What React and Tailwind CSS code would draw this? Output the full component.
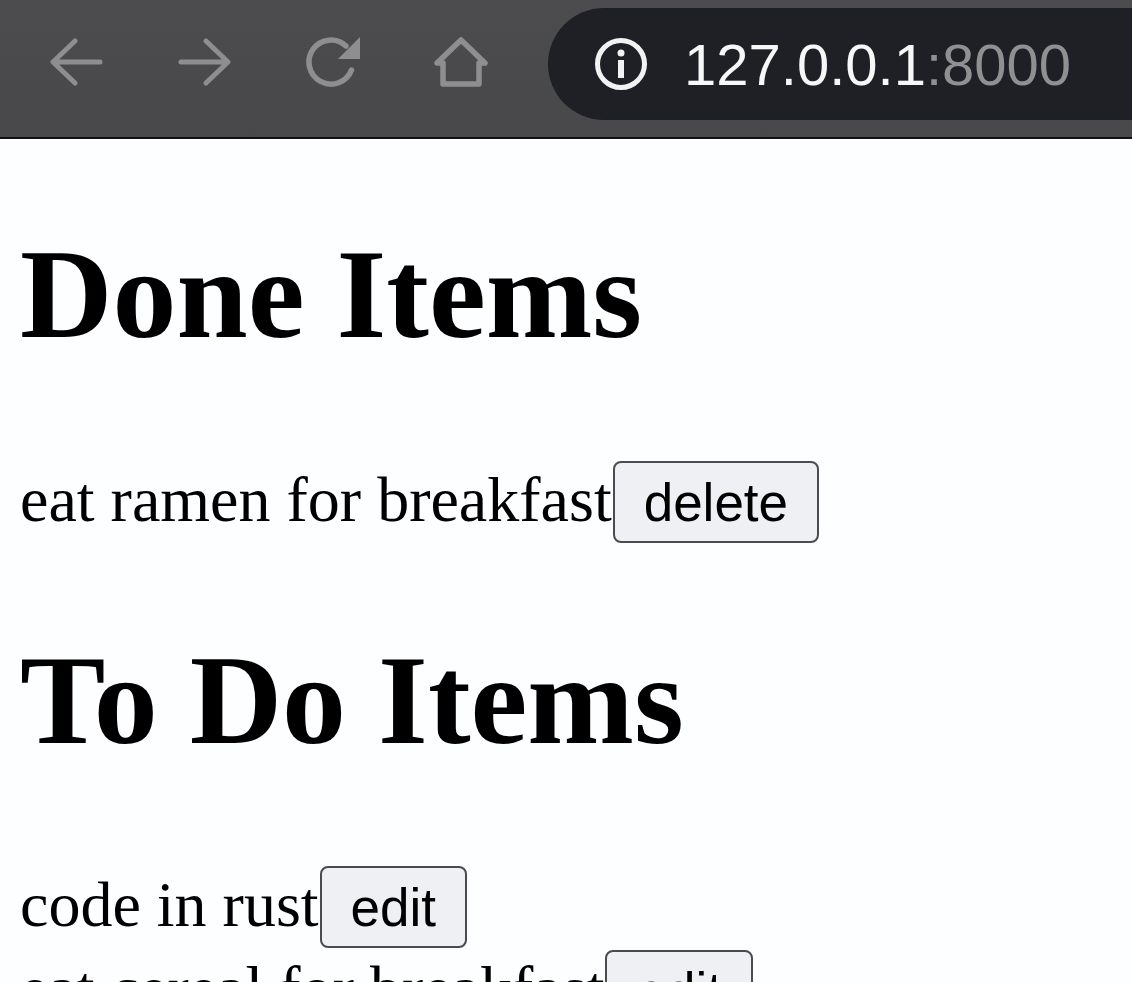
import React from "react";

const iconColor = "#8e8e90";

function Back() {
  return (
    <svg width="54" height="48" viewBox="0 0 54 48" fill="none" stroke={iconColor} strokeWidth="5" strokeLinecap="round" strokeLinejoin="round">
      <path d="M50 24H4M25 3 3 24l22 21" />
    </svg>
  );
}

function Forward() {
  return (
    <svg width="54" height="48" viewBox="0 0 54 48" fill="none" stroke={iconColor} strokeWidth="5" strokeLinecap="round" strokeLinejoin="round">
      <path d="M3 24h46M28 3l22 21-22 21" />
    </svg>
  );
}

function Reload() {
  return (
    <svg width="54" height="50" viewBox="0 0 54 50" fill="none">
      <path d="M45.5 33A22 22 0 1 1 40 9" stroke={iconColor} strokeWidth="5.5" strokeLinecap="round" />
      <path d="M54 0v22H32z" fill={iconColor} />
    </svg>
  );
}

function Home() {
  return (
    <svg width="54" height="50" viewBox="0 0 54 50" fill="none" stroke={iconColor} strokeWidth="5.5" strokeLinejoin="round" strokeLinecap="round">
      <path d="M3 26 27 3l24 23h-6v21H9V26z" />
    </svg>
  );
}

function Info() {
  return (
    <svg width="54" height="54" viewBox="0 0 54 54" fill="none">
      <circle cx="27" cy="27" r="23.5" stroke="#f2f2f3" strokeWidth="5" />
      <circle cx="27" cy="16" r="3.5" fill="#f2f2f3" />
      <rect x="24" y="23" width="6" height="18" fill="#f2f2f3" />
    </svg>
  );
}

function Row({ text, label }) {
  return (
    <div className="flex items-baseline h-[84px] text-[64px] whitespace-nowrap">
      <span>{text}</span>
      <button className="ml-px h-[82px] px-[29px] bg-[#eff0f4] border-2 border-[#4a4a52] rounded-[8px] text-[53px] font-['Liberation_Sans',sans-serif] text-black">
        {label}
      </button>
    </div>
  );
}

export default function App() {
  return (
    <div className="h-[982px] overflow-hidden bg-[#fdfeff] text-black font-['Liberation_Serif',serif]">
      <header className="flex items-center h-[139px] pl-[50px] bg-gradient-to-b from-[#4c4c4e] to-[#48484b] border-b-2 border-[#111111]">
        <div className="flex items-center gap-[74px] -mt-[14px]">
          <Back />
          <Forward />
          <Reload />
          <Home />
        </div>
        <div className="flex flex-1 items-center self-start mt-2 ml-[60px] h-[112px] pl-[46px] bg-[#1f2025] rounded-l-[56px]">
          <Info />
          <div className="ml-[36px] text-[58px] font-['Liberation_Sans',sans-serif] text-[#f7f7f8] whitespace-nowrap">
            127.0.0.1<span className="text-[#8f9092]">:8000</span>
          </div>
        </div>
      </header>
      <main className="pl-5">
        <h1 className="mt-[81px] text-[128px] font-bold leading-[148px]">Done Items</h1>
        <div className="mt-[84px]">
          <Row text="eat ramen for breakfast" label="delete" />
        </div>
        <h1 className="mt-[90px] text-[128px] font-bold leading-[148px]">To Do Items</h1>
        <div className="mt-[83px]">
          <Row text="code in rust" label="edit" />
          <Row text="eat cereal for breakfast" label="edit" />
        </div>
      </main>
    </div>
  );
}
